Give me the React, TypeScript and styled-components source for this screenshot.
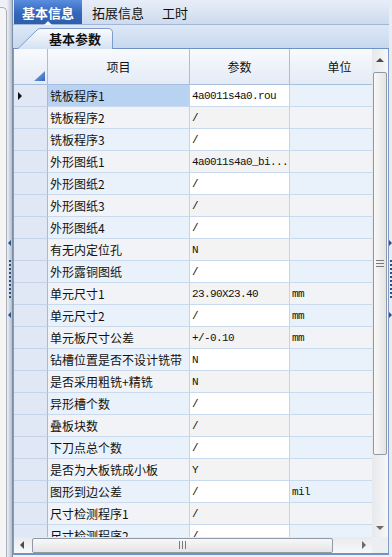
import React from "react";
import styled, { createGlobalStyle, css } from "styled-components";

const GlobalStyle = createGlobalStyle`
  html, body { margin: 0; padding: 0; }
  body {
    font-family: "Noto Sans CJK SC", "Liberation Sans", sans-serif;
    font-size: 12px;
    color: #111;
    background: #eef1f5;
  }
`;

const rows: [string, string, string][] = [
  ["铣板程序1", "4a0011s4a0.rou", ""],
  ["铣板程序2", "/", ""],
  ["铣板程序3", "/", ""],
  ["外形图纸1", "4a0011s4a0_bi...", ""],
  ["外形图纸2", "/", ""],
  ["外形图纸3", "/", ""],
  ["外形图纸4", "/", ""],
  ["有无内定位孔", "N", ""],
  ["外形露铜图纸", "/", ""],
  ["单元尺寸1", "23.90X23.40", "mm"],
  ["单元尺寸2", "/", "mm"],
  ["单元板尺寸公差", "+/-0.10", "mm"],
  ["钻槽位置是否不设计铣带", "N", ""],
  ["是否采用粗铣+精铣", "N", ""],
  ["异形槽个数", "/", ""],
  ["叠板块数", "/", ""],
  ["下刀点总个数", "/", ""],
  ["是否为大板铣成小板", "Y", ""],
  ["图形到边公差", "/", "mil"],
  ["尺寸检测程序1", "/", ""],
  ["尺寸检测程序2", "/", ""],
];

const Frame = styled.div`
  display: flex;
  width: 392px;
  height: 557px;
  overflow: hidden;
  background: #eef1f5;
`;

const SidePanel = styled.div`
  width: 6px;
  margin-top: 7px;
  background: #f5f5f5;
  border-top: 1px solid #a9afb8;
  border-right: 1px solid #a9afb8;
  border-top-right-radius: 5px;
`;

const Splitter = styled.div<{ $right?: boolean }>`
  width: ${({ $right }) => ($right ? "3px" : "5px")};
  display: flex;
  flex-direction: column;
  align-items: center;
  justify-content: center;
  gap: 6px;
  background: ${({ $right }) =>
    $right ? "#e9edf3" : "linear-gradient(to right, #eef1f5, #b3bfcf)"};
  border-right: ${({ $right }) => ($right ? "none" : "1px solid #7d8ea8")};
`;

const GripArrow = styled.span<{ $right?: boolean }>`
  width: 0;
  height: 0;
  border-top: 3px solid transparent;
  border-bottom: 3px solid transparent;
  ${({ $right }) =>
    $right
      ? css`border-left: 3px solid #2b4f86;`
      : css`border-right: 3px solid #2b4f86;`}
`;

const GripDots = styled.span`
  width: 2px;
  height: 38px;
  margin: 8px 0;
  background: repeating-linear-gradient(to bottom, #2e4f80 0 2px, transparent 2px 4px);
`;

const Main = styled.div`
  width: 376px;
  flex-shrink: 0;
  display: flex;
  flex-direction: column;
`;

const TopTabs = styled.div`
  height: 24px;
  display: flex;
  padding-left: 1px;
  background: linear-gradient(#e8eef8, #cddbee);
  border-bottom: 1px solid #a2b7d4;
`;

const TopTab = styled.div<{ $active?: boolean }>`
  position: relative;
  display: flex;
  align-items: center;
  padding: 0 8px;
  margin-right: 2px;
  font-size: 13px;
  ${({ $active }) =>
    $active &&
    css`
      color: #fff;
      font-weight: bold;
      background: linear-gradient(#5a8ede, #3466bb 55%, #2f5eae);
      &::after {
        content: "";
        position: absolute;
        left: 50%;
        bottom: -1px;
        margin-left: -4px;
        border-left: 4px solid transparent;
        border-right: 4px solid transparent;
        border-bottom: 4px solid #f4f7fc;
      }
    `}
`;

const SubStrip = styled.div`
  height: 23px;
  display: flex;
  align-items: flex-end;
  padding-left: 4px;
  background: linear-gradient(#dde8f7, #c7d8ee);
  border-bottom: 1px solid #6f92c4;
`;

const SubTab = styled.div`
  position: relative;
  width: 96px;
  height: 20px;
  display: flex;
  align-items: center;
  padding-left: 32px;
  box-sizing: border-box;
  font-size: 13px;
  font-weight: bold;
  span { position: relative; }
`;

const TabShape = styled.svg`
  position: absolute;
  left: 0;
  top: 0;
`;

const Grid = styled.div`
  flex: 1;
  min-height: 0;
  display: flex;
  flex-direction: column;
  border-left: 1px solid #7f9cc8;
  border-right: 1px solid #7f9cc8;
  border-bottom: 2px solid #7193c4;
  margin-bottom: 2px;
`;

const GridBody = styled.div`
  flex: 1;
  min-height: 0;
  display: flex;
`;

const Table = styled.div`
  width: 358px;
  overflow: hidden;
  background: #fff;
`;

const Row = styled.div<{ $header?: boolean }>`
  display: grid;
  grid-template-columns: 34px 142px 100px 100px;
  height: ${({ $header }) => ($header ? "36px" : "22px")};
`;

const HeadCell = styled.div`
  position: relative;
  display: flex;
  align-items: center;
  justify-content: center;
  background: linear-gradient(#f8fafd, #e3ebf6);
  border-right: 1px solid #a9bedb;
  border-bottom: 1px solid #a9bedb;
  font-size: 12px;
`;

const CornerMark = styled.span`
  position: absolute;
  right: 2px;
  bottom: 3px;
  width: 11px;
  height: 10px;
  background: linear-gradient(135deg, #8fb3e6, #2f64c0);
  clip-path: polygon(100% 0, 100% 100%, 0 100%);
`;

const RowHead = styled.div`
  display: flex;
  align-items: center;
  padding-left: 4px;
  background: #dfe8f4;
  border-right: 1px solid #a6bad6;
  border-bottom: 1px solid #c3d3e8;
`;

const Pointer = styled.span`
  border-top: 4px solid transparent;
  border-bottom: 4px solid transparent;
  border-left: 4px solid #111;
`;

const Cell = styled.div<{ $kind: "name" | "value" | "unit"; $even: boolean; $focus?: boolean }>`
  display: flex;
  align-items: center;
  padding-left: 2px;
  overflow: hidden;
  white-space: nowrap;
  border-right: 1px solid #c3d4ea;
  border-bottom: 1px solid #c9d9ee;
  background: ${({ $kind, $even, $focus }) =>
    $focus
      ? "#b8d2f1"
      : $kind === "value"
      ? $even
        ? "#f3f3f3"
        : "#ffffff"
      : $even
      ? "#f2f3f6"
      : "#e9f1fb"};
  ${({ $kind }) =>
    $kind !== "name" &&
    css`
      font-family: "Liberation Mono", "DejaVu Sans Mono", monospace;
      font-size: 11px;
      letter-spacing: -0.6px;
    `}
`;

const VScroll = styled.div`
  width: 16px;
  display: flex;
  flex-direction: column;
  align-items: center;
  background: linear-gradient(to right, #e6e8ec, #f7f7f8);
`;

const ArrowBtn = styled.div<{ $h: number }>`
  height: ${({ $h }) => $h}px;
  width: 16px;
  flex-shrink: 0;
  display: flex;
  align-items: center;
  justify-content: center;
`;

const Tri = styled.span<{ $dir: "up" | "down" | "left" | "right" }>`
  width: 0;
  height: 0;
  ${({ $dir }) =>
    $dir === "up"
      ? css`border-left: 4px solid transparent; border-right: 4px solid transparent; border-bottom: 4px solid #4b4b4b;`
      : $dir === "down"
      ? css`border-left: 4px solid transparent; border-right: 4px solid transparent; border-top: 4px solid #6b6b6b;`
      : $dir === "left"
      ? css`border-top: 4px solid transparent; border-bottom: 4px solid transparent; border-right: 4px solid #4b4b4b;`
      : css`border-top: 4px solid transparent; border-bottom: 4px solid transparent; border-left: 4px solid #6b6b6b;`}
`;

const Thumb = styled.div<{ $horizontal?: boolean }>`
  box-sizing: border-box;
  display: flex;
  align-items: center;
  justify-content: center;
  border: 1px solid #8f99a8;
  border-radius: 2px;
  background: ${({ $horizontal }) =>
    $horizontal
      ? "linear-gradient(#f8f8f8, #e4e4e4)"
      : "linear-gradient(to right, #f8f8f8, #e4e4e4)"};
  ${({ $horizontal }) =>
    $horizontal
      ? css`width: 301px; height: 15px; margin-left: 2px;`
      : css`width: 14px; height: 383px; margin-top: 1px;`}
`;

const Grip = styled.span<{ $horizontal?: boolean }>`
  ${({ $horizontal }) =>
    $horizontal
      ? css`
          width: 7px;
          height: 8px;
          background: repeating-linear-gradient(to right, #7a7a7a 0 1px, transparent 1px 3px);
        `
      : css`
          width: 8px;
          height: 7px;
          background: repeating-linear-gradient(to bottom, #7a7a7a 0 1px, transparent 1px 3px);
        `}
`;

const HScrollRow = styled.div`
  height: 16px;
  display: flex;
`;

const HScroll = styled.div`
  width: 358px;
  display: flex;
  align-items: center;
  background: linear-gradient(#e8eaee, #f8f8f9);
`;

const Spacer = styled.div`
  flex: 1;
`;

const ScrollCorner = styled.div`
  width: 16px;
  background: #eceef1;
`;

export default function App() {
  return (
    <>
      <GlobalStyle />
      <Frame>
        <SidePanel />
        <Splitter>
          <GripArrow />
          <GripDots />
          <GripArrow />
        </Splitter>
        <Main>
          <TopTabs>
            <TopTab $active>基本信息</TopTab>
            <TopTab>拓展信息</TopTab>
            <TopTab>工时</TopTab>
          </TopTabs>
          <SubStrip>
            <SubTab>
              <TabShape width="96" height="21" viewBox="0 0 96 21">
                <defs>
                  <linearGradient id="tabFill" x1="0" y1="0" x2="0" y2="1">
                    <stop offset="0" stopColor="#fbfcfe" />
                    <stop offset="1" stopColor="#d3e1f3" />
                  </linearGradient>
                </defs>
                <path
                  d="M0.5 21 L20 2 Q21.5 0.5 24 0.5 L91 0.5 Q95.5 0.5 95.5 5 L95.5 21"
                  fill="url(#tabFill)"
                  stroke="#7d9bcb"
                />
              </TabShape>
              <span>基本参数</span>
            </SubTab>
          </SubStrip>
          <Grid>
            <GridBody>
              <Table>
                <Row $header>
                  <HeadCell>
                    <CornerMark />
                  </HeadCell>
                  <HeadCell>项目</HeadCell>
                  <HeadCell>参数</HeadCell>
                  <HeadCell>单位</HeadCell>
                </Row>
                {rows.map(([name, value, unit], i) => (
                  <Row key={name}>
                    <RowHead>{i === 0 && <Pointer />}</RowHead>
                    <Cell $kind="name" $even={i % 2 === 1} $focus={i === 0}>
                      {name}
                    </Cell>
                    <Cell $kind="value" $even={i % 2 === 1}>
                      {value}
                    </Cell>
                    <Cell $kind="unit" $even={i % 2 === 1}>
                      {unit}
                    </Cell>
                  </Row>
                ))}
              </Table>
              <VScroll>
                <ArrowBtn $h={22}>
                  <Tri $dir="up" />
                </ArrowBtn>
                <Thumb>
                  <Grip />
                </Thumb>
                <Spacer />
                <ArrowBtn $h={18}>
                  <Tri $dir="down" />
                </ArrowBtn>
              </VScroll>
            </GridBody>
            <HScrollRow>
              <HScroll>
                <ArrowBtn $h={16}>
                  <Tri $dir="left" />
                </ArrowBtn>
                <Thumb $horizontal>
                  <Grip $horizontal />
                </Thumb>
                <Spacer />
                <ArrowBtn $h={16}>
                  <Tri $dir="right" />
                </ArrowBtn>
              </HScroll>
              <ScrollCorner />
            </HScrollRow>
          </Grid>
        </Main>
        <Splitter $right>
          <GripArrow $right />
          <GripDots />
          <GripArrow $right />
        </Splitter>
      </Frame>
    </>
  );
}
